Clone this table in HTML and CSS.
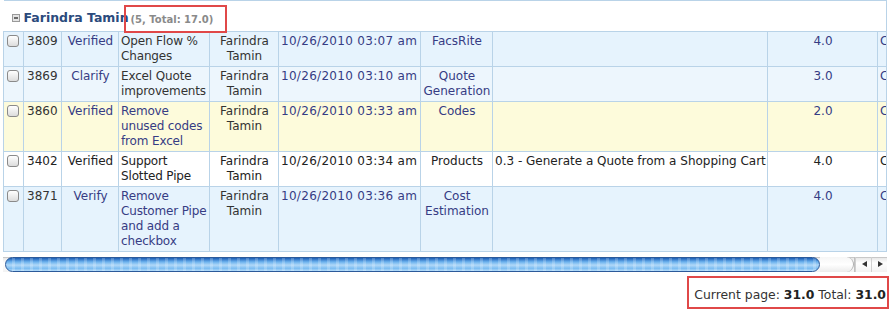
FILE: index.html
```html
<!DOCTYPE html>
<html>
<head>
<meta charset="utf-8">
<link rel="stylesheet" href="styles.css">
</head>
<body>
<div class="page">
  <div class="grid-wrap">
    <table class="grid">
      <colgroup>
        <col class="c-cb"><col class="c-id"><col class="c-st"><col class="c-ti"><col class="c-nm"><col class="c-dt"><col class="c-ca"><col class="c-de"><col class="c-es"><col class="c-ls">
      </colgroup>
      <tr class="group">
        <td colspan="10">
          <div class="group-head">
            <span class="toggle"></span>
            <span class="group-name">Farindra Tamin</span>
            <span class="group-count">(5, Total: 17.0)</span>
          </div>
        </td>
      </tr>
      <tr class="row blue">
        <td class="cb"><span class="check"></span></td>
        <td class="id">3809</td>
        <td class="ctr link">Verified</td>
        <td class="ti">Open Flow % Changes</td>
        <td class="ctr">Farindra Tamin</td>
        <td class="link dt">10/26/2010 03:07 am</td>
        <td class="ctr link">FacsRite</td>
        <td class="de"></td>
        <td class="ctr link">4.0</td>
        <td class="link">C</td>
      </tr>
      <tr class="row blue2">
        <td class="cb"><span class="check"></span></td>
        <td class="id">3869</td>
        <td class="ctr link">Clarify</td>
        <td class="ti">Excel Quote improvements</td>
        <td class="ctr">Farindra Tamin</td>
        <td class="link dt">10/26/2010 03:10 am</td>
        <td class="ctr link">Quote Generation</td>
        <td class="de"></td>
        <td class="ctr link">3.0</td>
        <td class="link">C</td>
      </tr>
      <tr class="row yellow">
        <td class="cb"><span class="check"></span></td>
        <td class="id">3860</td>
        <td class="ctr link">Verified</td>
        <td class="ti link">Remove unused codes from Excel</td>
        <td class="ctr">Farindra Tamin</td>
        <td class="link dt">10/26/2010 03:33 am</td>
        <td class="ctr link">Codes</td>
        <td class="de"></td>
        <td class="ctr link">2.0</td>
        <td class="link">C</td>
      </tr>
      <tr class="row white">
        <td class="cb"><span class="check"></span></td>
        <td class="id">3402</td>
        <td class="ctr">Verified</td>
        <td class="ti">Support Slotted Pipe</td>
        <td class="ctr">Farindra Tamin</td>
        <td class="dt">10/26/2010 03:34 am</td>
        <td class="ctr">Products</td>
        <td class="de">0.3 - Generate a Quote from a Shopping Cart</td>
        <td class="ctr">4.0</td>
        <td>C</td>
      </tr>
      <tr class="row blue">
        <td class="cb"><span class="check"></span></td>
        <td class="id">3871</td>
        <td class="ctr link">Verify</td>
        <td class="ti link">Remove Customer Pipe and add a checkbox</td>
        <td class="ctr">Farindra Tamin</td>
        <td class="link dt">10/26/2010 03:36 am</td>
        <td class="ctr link">Cost Estimation</td>
        <td class="de"></td>
        <td class="ctr link">4.0</td>
        <td class="link">C</td>
      </tr>
    </table>
  </div>
  <div class="hscroll">
    <div class="thumb"></div>
    <div class="track-end"></div>
    <div class="arrows">
      <span class="arrow left"></span>
      <span class="arrow right"></span>
    </div>
  </div>
  <div class="footer">
    <div class="totals">Current page: <b>31.0</b> Total: <b>31.0</b></div>
  </div>
</div>
</body>
</html>
```
FILE: styles.css
```css
html, body {
  margin: 0;
  padding: 0;
  background: #ffffff;
}
body {
  font-family: "DejaVu Sans", Verdana, sans-serif;
  font-size: 12px;
  color: #333333;
}
.page {
  padding-left: 3px;
  width: 884px;
}
.grid-wrap {
  width: 883px;
  overflow: hidden;
  border-right: 1px solid #b9d3e8;
}
.grid {
  table-layout: fixed;
  border-collapse: collapse;
  width: 954px;
}
.c-cb { width: 20px; }
.c-id { width: 38px; }
.c-st { width: 57px; }
.c-ti { width: 91px; }
.c-nm { width: 69px; }
.c-dt { width: 142px; }
.c-ca { width: 72px; }
.c-de { width: 275px; }
.c-es { width: 110px; }
.c-ls { width: 80px; }

.group td {
  border-top: 1px solid #b9d3e8;
  border-left: 0;
  height: 30px;
  padding: 0;
  background: #ffffff;
}
.group-head {
  position: relative;
  display: flex;
  align-items: center;
  height: 30px;
  padding-left: 8px;
  padding-top: 3px;
  box-sizing: border-box;
}
.toggle {
  width: 6px;
  height: 6px;
  border: 1px solid #9a9a9a;
  background: #e4e4e4;
  position: relative;
  margin-right: 4px;
}
.toggle::after {
  content: "";
  position: absolute;
  left: 1px;
  right: 1px;
  top: 2px;
  height: 2px;
  background: #6a6a6a;
}
.group-name {
  font-weight: bold;
  font-size: 12.5px;
  color: #2b4a7c;
}
.group-count {
  position: absolute;
  left: 120px;
  top: 4px;
  width: 103px;
  height: 28px;
  border: 2px solid #e04848;
  font-weight: bold;
  font-size: 10px;
  color: #8a8a8a;
  padding: 7px 0 0 5px;
  box-sizing: border-box;
  white-space: nowrap;
}

.row td {
  border: 1px solid #b9d3e8;
  padding: 2px 1px 2px 2px;
  line-height: 15px;
  vertical-align: top;
  overflow: hidden;
  color: #333333;
}
.row td:last-child {
  white-space: nowrap;
  padding-left: 2px;
}
.row .ctr { text-align: center; }
.row .link { color: #363c84; }
.row .id { padding-left: 3px; }
.row .cb { padding: 2px 0 0 3px; }
.row .dt { letter-spacing: 0.3px; }
.row .ti { letter-spacing: -0.15px; }
.row .de { white-space: nowrap; }
.blue td { background: #e6f3fd; }
.blue2 td { background: #edf6fd; }
.yellow td { background: #fdfbdb; }
.white td { background: #ffffff; }
.white td, .white .link { color: #222222; }

.check {
  display: block;
  width: 10px;
  height: 10px;
  border: 1px solid #8a8a8a;
  border-radius: 3px;
  background: linear-gradient(#ffffff, #dcdcdc);
  margin-top: 1px;
}

.hscroll {
  margin-top: 5px;
  height: 15px;
  width: 884px;
  display: flex;
  align-items: stretch;
  background: linear-gradient(#e4e4e4, #ffffff 40%, #f2f2f2);
  box-shadow: inset 0 1px 0 #c8c8c8;
}
.thumb {
  width: 815px;
  margin-left: 2px;
  border-radius: 8px;
  background:
    repeating-linear-gradient(90deg, rgba(255,255,255,0.0) 0 6px, rgba(255,255,255,0.2) 6px 9px),
    linear-gradient(#1a5cb5, #6cb2ee 30%, #b0d8f8 55%, #7cbdf2 80%, #b4dcfa);
  border: 1px solid #2c5a9a;
  box-sizing: border-box;
}
.track-end {
  width: 33px;
  border-radius: 0 8px 8px 0;
  border-right: 1px solid #b0b0b0;
  background: linear-gradient(#f6f6f6, #ffffff 50%, #ececec);
}
.arrows {
  margin-left: auto;
  width: 32px;
  display: flex;
  border-left: 1px solid #c0c0c0;
}
.arrow {
  flex: 1;
  position: relative;
  border-left: 1px solid #d0d0d0;
}
.arrow::after {
  content: "";
  position: absolute;
  top: 4px;
  left: 6px;
  border-top: 3px solid transparent;
  border-bottom: 3px solid transparent;
}
.arrow.left::after { border-right: 5px solid #333; }
.arrow.right::after { border-left: 5px solid #333; }

.footer {
  display: flex;
  justify-content: flex-end;
  margin-top: 4px;
  width: 886px;
}
.totals {
  border: 2px solid #e04848;
  height: 33px;
  box-sizing: border-box;
  padding: 9px 1px 0 5px;
  font-size: 12.4px;
  color: #333333;
  white-space: nowrap;
}
.totals b { color: #222222; }
```
